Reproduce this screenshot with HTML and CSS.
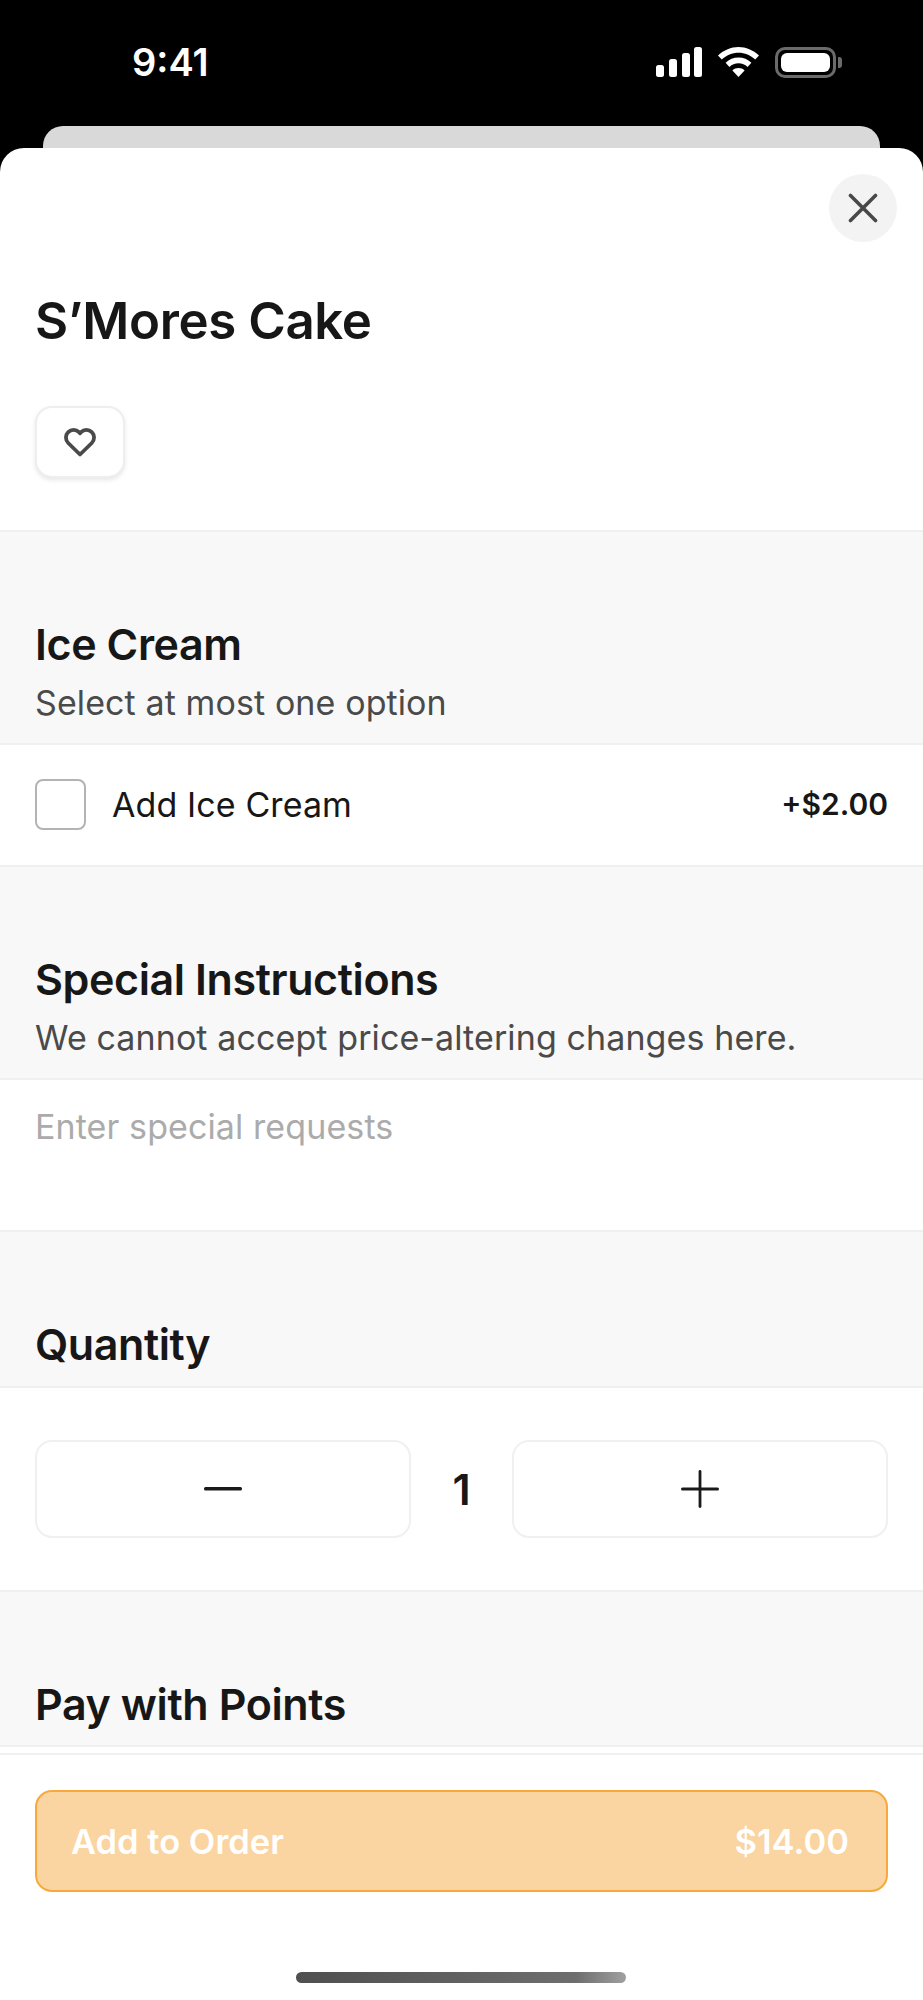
FILE: index.html
```html
<!DOCTYPE html>
<html lang="en">
<head>
  <meta charset="UTF-8" />
  <meta name="viewport" content="width=device-width, initial-scale=1.0" />
  <title>S'Mores Cake</title>
  <link rel="stylesheet" href="styles.css">
</head>
<body>

  <div class="status-bar">
    <span class="time">9:41</span>
    <div class="status-icons">
      <svg width="46" height="30" viewBox="0 0 46 30" fill="#fff">
        <rect x="0" y="18" width="8" height="12" rx="2.5" />
        <rect x="13" y="12" width="8" height="18" rx="2.5" />
        <rect x="26" y="6" width="8" height="24" rx="2.5" />
        <rect x="38" y="0" width="8" height="30" rx="2.5" />
      </svg>
      <svg width="41" height="30" viewBox="0 0 41 30" fill="#fff">
        <path d="M20.5 0C28 0 35 3 41 8.5L37.2 12.6C32.6 8.2 26.8 5.8 20.5 5.8S8.4 8.2 3.8 12.6L0 8.5C6 3 13 0 20.5 0Z" />
        <path d="M20.5 10.6C25.4 10.6 29.8 12.4 33.4 15.8L29.6 19.9C27 17.5 24 16.2 20.5 16.2S14 17.5 11.4 19.9L7.6 15.8C11.2 12.4 15.6 10.6 20.5 10.6Z" />
        <path d="M20.5 21C22.8 21 24.9 21.8 26.6 23.4L20.5 30L14.4 23.4C16.1 21.8 18.2 21 20.5 21Z" />
      </svg>
      <div class="battery"><div class="battery-fill"></div></div>
      <div class="battery-nub"></div>
    </div>
  </div>

  <div class="back-card"></div>

  <div class="sheet">
    <div class="scroll">
      <div class="hero">
        <button class="close-btn">
          <svg width="30" height="30" viewBox="0 0 30 30" fill="none" stroke="#484848" stroke-width="3.6" stroke-linecap="round">
            <path d="M2.5 2.5L27.5 27.5M27.5 2.5L2.5 27.5" />
          </svg>
        </button>
        <h1>S’Mores Cake</h1>
        <button class="fav-btn">
          <svg width="32" height="29" viewBox="0 0 32 29" fill="none" stroke="#4a4a4a" stroke-width="3.8" stroke-linejoin="round">
            <path d="M16 26.5L4.2 15C1.2 12 1.2 7.2 4.2 4.2C7.2 1.2 12 1.2 15 4.2L16 5.4L17 4.2C20 1.2 24.8 1.2 27.8 4.2C30.8 7.2 30.8 12 27.8 15Z" />
          </svg>
        </button>
      </div>

      <div class="section-head ice-head">
        <h2>Ice Cream</h2>
        <p>Select at most one option</p>
      </div>
      <div class="option-row">
        <span class="checkbox"></span>
        <span class="option-name">Add Ice Cream</span>
        <span class="option-price">+$2.00</span>
      </div>

      <div class="section-head instr-head">
        <h2>Special Instructions</h2>
        <p>We cannot accept price-altering changes here.</p>
      </div>
      <div class="requests">Enter special requests</div>

      <div class="section-head qty-head">
        <h2>Quantity</h2>
      </div>
      <div class="qty-row">
        <button class="qty-btn">
          <svg width="38" height="4" viewBox="0 0 38 4"><rect width="38" height="3.4" rx="1.5" fill="#1a1a1a" /></svg>
        </button>
        <span class="qty-num">1</span>
        <button class="qty-btn">
          <svg width="38" height="38" viewBox="0 0 38 38" fill="#1a1a1a">
            <rect y="17.4" width="38" height="3.2" rx="1.5" />
            <rect x="17.6" width="2.8" height="38" rx="1.4" />
          </svg>
        </button>
      </div>

      <div class="section-head pay-head">
        <h2>Pay with Points</h2>
      </div>
    </div>

    <div class="footer">
      <button class="order-btn">
        <span>Add to Order</span>
        <span>$14.00</span>
      </button>
      <div class="home-bar"></div>
    </div>
  </div>

</body>
</html>
```

FILE: styles.css
```css
* {
  box-sizing: border-box;
}

body {
  margin: 0;
  width: 923px;
  height: 2000px;
  overflow: hidden;
  background: #000;
  font-family: 'Inter', sans-serif;
  color: #171717;
  display: flex;
  flex-direction: column;
}

button {
  font-family: inherit;
  padding: 0;
  background: #fff;
  cursor: pointer;
}

/* status bar */
.status-bar {
  height: 126px;
  flex-shrink: 0;
  display: flex;
  justify-content: space-between;
  padding: 47px 81px 0 132px;
  color: #fff;
}

.time {
  font-size: 38px;
  font-weight: 600;
  line-height: 30px;
}

.status-icons {
  display: flex;
  align-items: flex-start;
  height: 30px;
}

.status-icons svg {
  margin-right: 16px;
}

.battery {
  width: 61px;
  height: 31px;
  border: 3px solid #6b6b6b;
  border-radius: 10px;
  padding: 3px;
}

.battery-fill {
  height: 100%;
  background: #fff;
  border-radius: 6px;
}

.battery-nub {
  width: 4px;
  height: 11px;
  margin: 10px 0 0 2px;
  background: #6b6b6b;
  border-radius: 0 3px 3px 0;
}

.back-card {
  height: 22px;
  flex-shrink: 0;
  margin: 0 43px;
  background: #d9d9d9;
  border-radius: 20px 20px 0 0;
}

/* sheet */
.sheet {
  flex: 1;
  min-height: 0;
  display: flex;
  flex-direction: column;
  background: #fff;
  border-radius: 24px 24px 0 0;
  overflow: hidden;
}

.scroll {
  height: 1600px;
  flex-shrink: 0;
  overflow: hidden;
}

.hero {
  position: relative;
  height: 384px;
  padding: 143px 35px 0;
  border-bottom: 2px solid #f0f0f0;
}

.close-btn {
  position: absolute;
  top: 26px;
  right: 26px;
  width: 68px;
  height: 68px;
  border: none;
  border-radius: 50%;
  background: #f3f3f3;
  display: flex;
  align-items: center;
  justify-content: center;
}

h1 {
  margin: 0;
  font-size: 51px;
  font-weight: 600;
  line-height: 60px;
  letter-spacing: -0.4px;
}

.fav-btn {
  display: flex;
  align-items: center;
  justify-content: center;
  width: 90px;
  height: 72px;
  margin-top: 55px;
  border: 2px solid #eeeeee;
  border-radius: 17px;
  box-shadow: 0 2px 4px rgba(0, 0, 0, 0.1);
}

.section-head {
  background: #f8f8f8;
  padding: 0 35px;
}

.section-head h2 {
  margin: 0;
  font-size: 43px;
  font-weight: 600;
  line-height: 50px;
  letter-spacing: -0.4px;
}

.section-head p {
  margin: 13px 0 0;
  font-size: 34px;
  line-height: 42px;
  color: #4a4a4a;
  letter-spacing: 0.1px;
}

.ice-head {
  height: 211px;
  padding-top: 87px;
}

.instr-head {
  height: 211px;
  padding-top: 87px;
}

.qty-head {
  height: 154px;
  padding-top: 87px;
}

.pay-head {
  height: 155px;
  padding-top: 87px;
  border-bottom: 2px solid #f0f0f0;
}

.option-row {
  height: 124px;
  display: flex;
  align-items: center;
  padding: 0 35px 2px;
  border-top: 2px solid #f0f0f0;
  border-bottom: 2px solid #f0f0f0;
  background: #fff;
}

.checkbox {
  width: 51px;
  height: 51px;
  border: 2px solid #b3b3b3;
  border-radius: 8px;
  margin-right: 26px;
}

.option-name {
  flex: 1;
  font-size: 34px;
  letter-spacing: 0.1px;
}

.option-price {
  font-size: 30px;
  font-weight: 600;
}

.requests {
  height: 154px;
  padding: 26px 35px 0;
  border-top: 2px solid #f0f0f0;
  border-bottom: 2px solid #f0f0f0;
  background: #fff;
  font-size: 34px;
  line-height: 42px;
  letter-spacing: 0.1px;
  color: #ababab;
}

.qty-row {
  height: 206px;
  display: flex;
  align-items: center;
  padding: 0 35px;
  border-top: 2px solid #f0f0f0;
  border-bottom: 2px solid #f0f0f0;
  background: #fff;
}

.qty-btn {
  flex: 1;
  height: 98px;
  display: flex;
  align-items: center;
  justify-content: center;
  border: 2px solid #f0f0f0;
  border-radius: 17px;
}

.qty-num {
  width: 101px;
  text-align: center;
  font-size: 43px;
  font-weight: 600;
}

/* footer */
.footer {
  flex: 1;
  padding: 35px 35px 0;
  margin-top: 5px;
  border-top: 2px solid #f0f0f0;
  background: #fff;
}

.order-btn {
  width: 100%;
  height: 102px;
  display: flex;
  align-items: center;
  justify-content: space-between;
  padding: 0 37px 0 34px;
  background: #fad4a1;
  border: 2px solid #f7a93c;
  border-radius: 17px;
  color: #fff;
  font-size: 34.5px;
  font-weight: 600;
}

.home-bar {
  width: 330px;
  height: 11px;
  margin: 80px 0 0 261px;
  border-radius: 6px;
  background: linear-gradient(90deg, #4f4f4f, #6e6e6e 85%, #a0a0a0);
}
```
